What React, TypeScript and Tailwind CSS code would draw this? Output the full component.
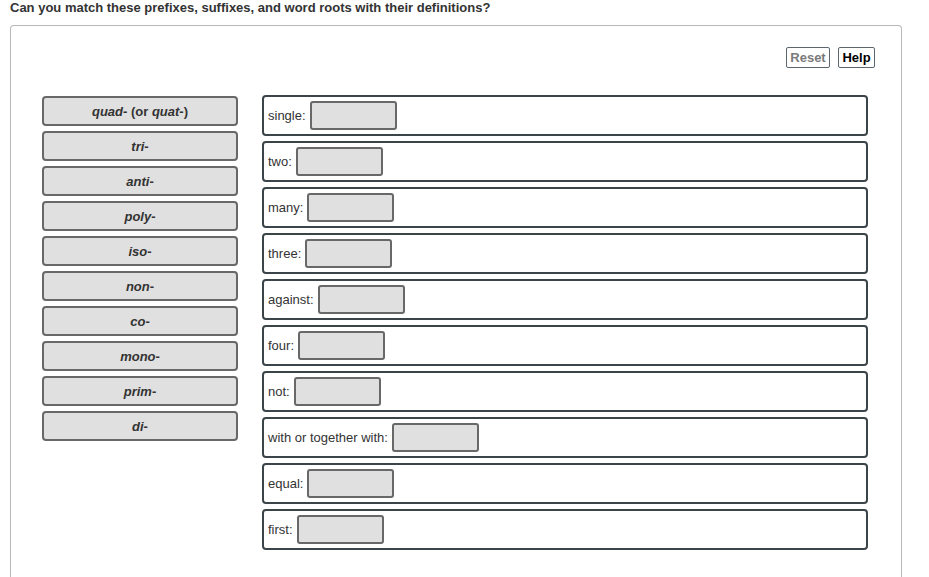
import type { ReactNode } from "react";

const roots: ReactNode[] = [
  <>
    <i>quad</i>- (or <i>quat</i>-)
  </>,
  <>
    <i>tri</i>-
  </>,
  <>
    <i>anti</i>-
  </>,
  <>
    <i>poly</i>-
  </>,
  <>
    <i>iso</i>-
  </>,
  <>
    <i>non</i>-
  </>,
  <>
    <i>co</i>-
  </>,
  <>
    <i>mono</i>-
  </>,
  <>
    <i>prim</i>-
  </>,
  <>
    <i>di</i>-
  </>,
];

const definitions = [
  "single",
  "two",
  "many",
  "three",
  "against",
  "four",
  "not",
  "with or together with",
  "equal",
  "first",
];

function DragChip({ children }: { children: ReactNode }) {
  return (
    <div className="h-[30px] w-[196px] flex items-center justify-center rounded-[4px] border-2 border-[#686868] bg-[#e0e0e0] text-[13px] font-bold text-[#333] leading-none">
      <span>{children}</span>
    </div>
  );
}

function DropRow({ label }: { label: string }) {
  return (
    <div className="h-[41px] flex items-center rounded-[4px] border-2 border-[#3b4448] bg-white pl-[4px]">
      <span className="text-[13px] text-[#333]">{label}:</span>
      <div className="ml-[4px] h-[29px] w-[87px] rounded-[3px] border-2 border-[#686868] bg-[#e0e0e0]" />
    </div>
  );
}

export default function App() {
  return (
    <div
      className="w-[929px] h-[577px] overflow-hidden bg-white"
      style={{ fontFamily: '"Liberation Sans", Arial, sans-serif' }}
    >
      <div className="pl-[10px] text-[13px] leading-[16px] font-bold text-[#333]">
        Can you match these prefixes, suffixes, and word roots with their definitions?
      </div>

      <div className="mt-[9px] ml-[10px] w-[892px] h-[560px] rounded-t-[4px] border border-b-0 border-[#b8b8b8]">
        <div className="flex justify-end gap-[8px] pt-[21px] pr-[26px]">
          <button
            type="button"
            disabled
            className="h-[21px] w-[44px] rounded-[2px] border border-[#5b666e] bg-white text-[13px] font-bold text-[#7a7a7a]"
          >
            Reset
          </button>
          <button
            type="button"
            className="h-[21px] w-[37px] rounded-[2px] border border-[#5b666e] bg-white text-[13px] font-bold text-black"
          >
            Help
          </button>
        </div>

        <div className="mt-[27px] pl-[31px] flex items-start gap-[24px]">
          <div className="mt-[1px] flex flex-col gap-[5px]">
            {roots.map((r, i) => (
              <DragChip key={i}>{r}</DragChip>
            ))}
          </div>
          <div className="w-[606px] flex flex-col gap-[5px]">
            {definitions.map((d) => (
              <DropRow key={d} label={d} />
            ))}
          </div>
        </div>
      </div>
    </div>
  );
}
